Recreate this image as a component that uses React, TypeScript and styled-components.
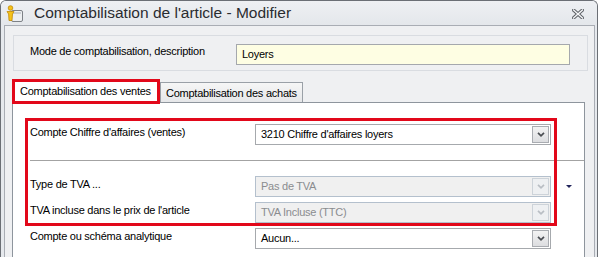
import React from 'react';
import styled, { createGlobalStyle } from 'styled-components';

const GlobalStyle = createGlobalStyle`
  html, body {
    margin: 0;
    padding: 0;
    background: #ffffff;
  }
  body {
    font-family: "Liberation Sans", Arial, sans-serif;
    font-size: 11px;
    letter-spacing: -0.25px;
    color: #000;
  }
`;

const RED = '#e2081a';

const Chevron = ({ disabled }: { disabled?: boolean }) => (
  <svg width="8" height="5" viewBox="0 0 8 5">
    <polyline
      points="1,0.8 4,3.8 7,0.8"
      fill="none"
      stroke={disabled ? '#b9bec4' : '#4a4d52'}
      strokeWidth="1.7"
    />
  </svg>
);

const ArticleIcon = () => (
  <svg width="17" height="17" viewBox="0 0 17 17">
    <rect x="5.5" y="5.5" width="11" height="11" rx="1.5" fill="#eceef0" stroke="#7d8186" />
    <rect x="7" y="7" width="8" height="2" fill="#c9cdd2" />
    <circle cx="4.5" cy="3" r="2.3" fill="#f5c219" stroke="#c18a06" strokeWidth="0.8" />
    <path d="M1 6.5 L8 6.5 L6.5 9 L6 15.5 L3 15.5 L2.6 9 Z" fill="#f5c219" stroke="#c18a06" strokeWidth="0.8" />
  </svg>
);

const CloseIcon = () => (
  <svg width="12" height="10" viewBox="0 0 12 10">
    <path d="M1.5 1 L10.5 9 M10.5 1 L1.5 9" stroke="#5f6368" strokeWidth="3.4" strokeLinecap="square" />
    <path d="M1.5 1 L10.5 9 M10.5 1 L1.5 9" stroke="#f4f5f7" strokeWidth="1.4" strokeLinecap="square" />
  </svg>
);

const App = () => {
  return (
    <>
      <GlobalStyle />
      <Window>
        <TitleBar>
          <ArticleIcon />
          <Title>Comptabilisation de l'article - Modifier</Title>
          <CloseButton><CloseIcon /></CloseButton>
        </TitleBar>
        <Client>
          <TopPanel>
            <TopLabel>Mode de comptabilisation, description</TopLabel>
            <DescInput>Loyers</DescInput>
          </TopPanel>

          <TabStrip>
            <Tab $active>Comptabilisation des ventes</Tab>
            <Tab>Comptabilisation des achats</Tab>
          </TabStrip>

          <TabPanel>
            <Highlighted>
              <AccountSection>
                <Row>
                  <Label>Compte Chiffre d'affaires (ventes)</Label>
                  <Select>
                    <SelectValue>3210 Chiffre d'affaires loyers</SelectValue>
                    <DropButton><Chevron /></DropButton>
                  </Select>
                </Row>
              </AccountSection>
              <Rows>
                <Row>
                  <Label>Type de TVA ...</Label>
                  <Select $disabled>
                    <SelectValue $disabled>Pas de TVA</SelectValue>
                    <DropButton $disabled><Chevron disabled /></DropButton>
                  </Select>
                  <Marker />
                </Row>
                <Row>
                  <Label>TVA incluse dans le prix de l'article</Label>
                  <Select $disabled>
                    <SelectValue $disabled>TVA Incluse (TTC)</SelectValue>
                    <DropButton $disabled><Chevron disabled /></DropButton>
                  </Select>
                </Row>
              </Rows>
            </Highlighted>
            <LastRow>
              <Label>Compte ou schéma analytique</Label>
              <Select>
                <SelectValue>Aucun...</SelectValue>
                <DropButton><Chevron /></DropButton>
              </Select>
            </LastRow>
          </TabPanel>
        </Client>
      </Window>
    </>
  );
};

const Window = styled.div`
  width: 598px;
  height: 257px;
  box-sizing: border-box;
  border: 1px solid #6b6f75;
  border-bottom: none;
  border-radius: 6px 6px 0 0;
  background: #e6e9ed;
  display: flex;
  flex-direction: column;
  overflow: hidden;
`;

const TitleBar = styled.div`
  height: 24px;
  flex: none;
  display: flex;
  align-items: center;
  padding: 0 13px 0 5px;
  background: linear-gradient(#eef0f3, #e4e7eb);
`;

const Title = styled.div`
  flex: 1;
  margin-left: 11px;
  font-size: 15.5px;
  letter-spacing: 0;
  line-height: 18px;
  color: #2a2c30;
`;

const CloseButton = styled.div`
  display: flex;
  align-items: center;
  padding-top: 1px;
`;

const Client = styled.div`
  flex: 1;
  margin: 0 2px 0 3px;
  border: 1px solid #a9adb4;
  border-bottom: none;
  background: #eff0f2;
  display: flex;
  flex-direction: column;
`;

const TopPanel = styled.div`
  margin: 9px 6px 0 8px;
  padding: 8px 17px 5px 16px;
  border: 1px solid #d9dce1;
  display: flex;
  align-items: flex-start;
`;

const TopLabel = styled.div`
  width: 206px;
  flex: none;
  line-height: 13px;
  padding-top: 1px;
`;

const DescInput = styled.div`
  flex: 1;
  height: 21px;
  box-sizing: border-box;
  border: 1px solid #a5a8ad;
  background: #fefee3;
  padding: 0 5px;
  line-height: 19px;
`;

const TabStrip = styled.div`
  margin: 8px 9px 0 7px;
  height: 23px;
  display: flex;
  align-items: flex-start;
`;

const Tab = styled.div<{ $active?: boolean }>`
  box-sizing: border-box;
  display: flex;
  align-items: center;
  line-height: 13px;
  ${({ $active }) =>
    $active
      ? `
    position: relative;
    z-index: 1;
    width: 148px;
    height: 25px;
    border: 3px solid ${RED};
    background: #ffffff;
    padding: 0 0 1px 5px;
  `
      : `
    width: 143px;
    height: 20px;
    margin-top: 3px;
    border: 1px solid #9aa0a7;
    border-bottom: none;
    background: linear-gradient(#f6f6f6, #e6e7e9);
    padding: 2px 0 0 5px;
  `}
`;

const TabPanel = styled.div`
  flex: 1;
  margin: 0 9px 0 7px;
  border: 1px solid #8e959d;
  border-bottom: none;
  background: #ffffff;
`;

const Highlighted = styled.div`
  position: relative;

  &::after {
    content: '';
    position: absolute;
    top: 15px;
    left: 12px;
    right: 27px;
    bottom: -3px;
    border: 3px solid ${RED};
    pointer-events: none;
  }
`;

const AccountSection = styled.div`
  margin-left: 17px;
  padding: 21px 0 15px;
  border-bottom: 1px solid #a3a3a3;
`;

const Rows = styled.div`
  padding: 15px 0 0 17px;
  display: flex;
  flex-direction: column;
  gap: 5px;
`;

const Row = styled.div`
  display: flex;
  align-items: flex-start;
`;

const LastRow = styled(Row)`
  margin: 5px 0 0 17px;
`;

const Label = styled.div`
  width: 225px;
  flex: none;
  line-height: 13px;
  padding-top: 2px;
`;

const Select = styled.div<{ $disabled?: boolean }>`
  width: 296px;
  height: 21px;
  box-sizing: border-box;
  display: flex;
  align-items: center;
  padding: 0 1px 0 5px;
  border: 1px solid ${({ $disabled }) => ($disabled ? '#b4c0cd' : '#a6a9ad')};
  background: ${({ $disabled }) => ($disabled ? '#f0f0f0' : '#ffffff')};
`;

const SelectValue = styled.div<{ $disabled?: boolean }>`
  flex: 1;
  line-height: 13px;
  color: ${({ $disabled }) => ($disabled ? '#8a8c8f' : '#000000')};
`;

const DropButton = styled.div<{ $disabled?: boolean }>`
  width: 17px;
  height: 17px;
  box-sizing: border-box;
  display: flex;
  align-items: center;
  justify-content: center;
  border: 1px solid ${({ $disabled }) => ($disabled ? '#cdd3d9' : '#a9acb1')};
  background: ${({ $disabled }) =>
    $disabled ? '#eef0f2' : 'linear-gradient(#f3f3f3, #dcdde0)'};
`;

const Marker = styled.div`
  width: 0;
  height: 0;
  margin: 9px 0 0 15px;
  border-left: 3px solid transparent;
  border-right: 3px solid transparent;
  border-top: 3px solid #20235a;
`;

export default App;
